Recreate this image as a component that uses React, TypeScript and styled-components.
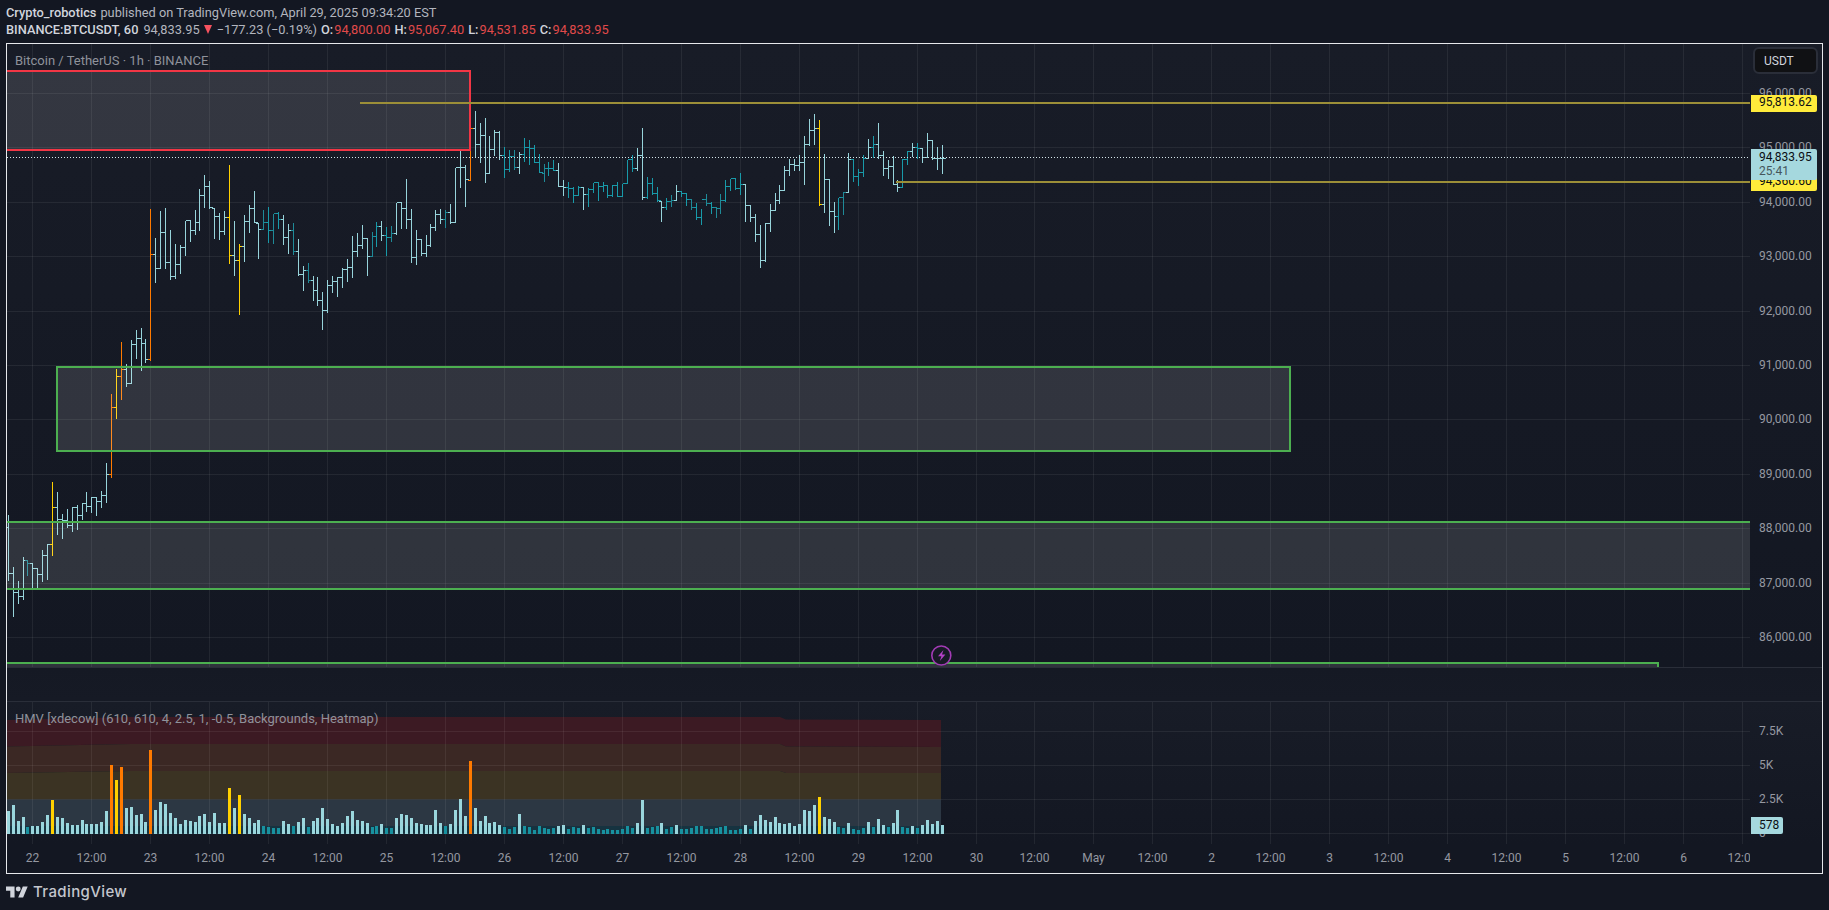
import React from "react";
import styled, { createGlobalStyle } from "styled-components";

const FONT = `Roboto, "Noto Sans", "Liberation Sans", sans-serif`;

const GlobalStyle = createGlobalStyle`
  html, body { margin: 0; padding: 0; background: #131722; }
  #root { width: 1829px; height: 910px; overflow: hidden; }
`;

const Page = styled.div`
  width: 1829px;
  height: 910px;
  display: flex;
  flex-direction: column;
  background: #131722;
  font-family: ${FONT};
  overflow: hidden;
`;

const Header = styled.header`
  height: 43px;
  box-sizing: border-box;
  padding: 4px 0 0 6px;
  display: flex;
  flex-direction: column;
  font-size: 12.8px;
  line-height: 17px;
  color: #b2b5be;
  white-space: nowrap;
`;

const MetaRow = styled.div`
  display: flex;
  align-items: center;
`;

const Strong = styled.span`
  color: #d1d4dc;
  font-weight: 500;
`;

const Quote = styled.span<{ $gap?: number }>`
  margin-left: ${(p) => p.$gap ?? 0}px;
  color: #b2b5be;
`;

const DownArrow = styled.span`
  width: 0;
  height: 0;
  margin: 0 5px 0 4px;
  border-left: 4.5px solid transparent;
  border-right: 4.5px solid transparent;
  border-top: 9px solid #f7525f;
`;

const OhlcKey = styled.span`
  margin-left: 4px;
  color: #d1d4dc;
  font-weight: 500;
`;

const OhlcValue = styled.span`
  margin-left: 1px;
  color: #e04a4a;
`;

const Frame = styled.section`
  width: 1817px;
  height: 831px;
  margin-left: 6px;
  box-sizing: border-box;
  border: 1px solid #e6e8ec;
  display: flex;
  flex-direction: column;
  flex: none;
`;

const Pane = styled.div<{ $height: number; $from: string; $to: string }>`
  height: ${(p) => p.$height}px;
  flex: none;
  display: flex;
  position: relative;
  background: linear-gradient(${(p) => p.$from}, ${(p) => p.$to});
`;

const Separator = styled.div`
  height: 1px;
  flex: none;
  background: #2a2e39;
`;

const Spacer = styled.div`
  height: 33px;
  flex: none;
  background: linear-gradient(#151924, #161a25);
`;

const Plot = styled.svg`
  width: 1743px;
  height: 100%;
  flex: none;
  display: block;
`;

const PriceAxis = styled.div`
  flex: 1;
  position: relative;
  color: #9598a1;
  font-size: 12px;
`;

const Legend = styled.div`
  position: absolute;
  left: 8px;
  font-size: 13px;
  line-height: 16px;
  color: #8f929b;
  white-space: nowrap;
`;

const AxisText = styled.span`
  position: absolute;
  left: 9px;
  transform: translateY(-50%);
  line-height: 14px;
  white-space: nowrap;
`;

const PriceTag = styled.div<{ $bg: string }>`
  position: absolute;
  left: 1px;
  width: 66px;
  box-sizing: border-box;
  padding-left: 8px;
  background: ${(p) => p.$bg};
  color: #0b0e14;
  line-height: 15px;
  border-radius: 0 2px 2px 0;
`;

const DualTag = styled(PriceTag)`
  padding-top: 1px;
  line-height: 14px;
`;

const Countdown = styled.div`
  color: #45565b;
`;

const VolumeTag = styled(PriceTag)`
  width: 32px;
  padding-top: 1px;
`;

const CurrencyButton = styled.div`
  position: absolute;
  top: 3px;
  left: 3px;
  width: 65px;
  height: 27px;
  box-sizing: border-box;
  padding-left: 9px;
  display: flex;
  align-items: center;
  background: #101114;
  border: 2px solid #2a2e39;
  border-radius: 6px;
  color: #d1d4dc;
  font-size: 12px;
`;

const TimeAxis = styled.div`
  height: 29px;
  flex: none;
  position: relative;
  background: #131722;
`;

const TimeTrack = styled.div`
  position: absolute;
  inset: 0 auto 0 0;
  width: 1743px;
  overflow: hidden;
`;

const TimeLabel = styled.span`
  position: absolute;
  top: 7px;
  transform: translateX(-50%);
  color: #9598a1;
  font-size: 12px;
  line-height: 15px;
  white-space: nowrap;
`;

const Footer = styled.footer`
  display: flex;
  align-items: center;
  gap: 5px;
  padding: 7px 0 0 6px;
`;

const LogoMark = styled.svg`
  width: 22px;
  height: 12px;
  display: block;
  fill: #d1d4dc;
`;

const LogoText = styled.span`
  font-family: Inter, "Noto Sans", sans-serif;
  font-size: 15px;
  font-weight: 500;
  line-height: 22px;
  color: #c4c6cd;
  letter-spacing: 0.38px;
`;

type Kind = "L" | "T" | "D" | "Y" | "O";
type Row = [Kind, number, number, number, number];

const BAR_COLOR: Record<Kind, string> = {
  L: "#97d4db",
  T: "#189aa9",
  D: "#1f8a98",
  Y: "#ffd000",
  O: "#ff7a00",
};

const A: Row[] = [
  ["L",620,582,780,760],["L",760,738,888,815],["L",815,780,849,827],["L",827,708,837,720],["D",720,717,765,730],
  ["L",730,726,807,745],["L",745,745,801,763],["L",763,687,783,706],["L",706,669,777,673],["Y",673,483,705,562],
  ["L",562,513,642,598],["L",598,579,654,601],["L",601,564,621,616],["L",616,558,633,562],["L",562,552,627,586],
  ["L",586,546,597,549],["L",549,513,573,558],["L",558,528,576,531],["L",531,528,585,544],["L",544,510,561,525],
  ["L",525,426,546,463],["O",463,219,471,262],["Y",262,144,294,169],["O",169,63,237,148],["L",148,129,198,190],
  ["L",190,57,189,72],["L",72,27,114,55],["L",55,21,150,70],["L",70,54,126,118],
];
const B: Row[] = [
  ["O",688,234,690,373],["L",373,321,456,415],["L",415,240,411,307],["L",307,231,414,397],["L",397,297,447,439],
  ["L",439,339,444,403],["L",403,342,429,352],["L",352,270,375,270],["L",270,270,333,301],["L",301,237,312,277],
  ["L",277,174,300,196],["L",196,132,231,169],["L",169,150,233,232],["L",235,231,324,259],["L",259,246,327,304],
  ["L",304,240,312,262],["Y",262,102,399,376],["L",376,270,435,391],["Y",391,339,552,349],["L",349,252,393,274],
  ["L",274,222,306,235],["L",235,180,277,277],["L",280,280,384,298],["D",298,237,298,277],["T",277,228,336,301],
  ["D",301,250,339,250],["T",250,243,294,268],["L",268,252,342,322],["L",322,279,369,301],["D",301,276,372,364],
  ["L",364,324,434,433],["L",433,405,480,421],["D",421,396,456,450],["L",450,435,510,481],["L",481,438,525,511],
  ["L",511,483,597,541],["L",541,447,545,466],["L",466,435,486,454],["L",454,438,498,441],["L",441,411,471,418],
  ["L",418,384,453,411],["L",411,315,441,364],["L",364,306,378,346],["L",346,282,354,325],["L",325,325,435,379],
  ["D",379,303,375,319],["T",319,273,348,289],["L",289,270,330,316],["T",316,288,375,322],["D",322,285,333,310],
  ["L",310,217,312,217],["L",217,217,294,235],["L",235,144,294,268],["L",268,235,396,381],["L",381,297,402,328],
  ["L",328,328,376,370],["L",370,312,378,346],["L",346,280,348,292],["L",292,238,300,253],["L",253,235,280,268],
  ["D",268,238,291,247],["L",247,220,280,277],["L",275,110,275,112],["L",112,55,170,112],["L",112,102,228,148],
];
const C: Row[] = [
  ["O",271,40,271,115],["L",115,60,202,163],["L",163,96,216,136],["L",136,82,276,250],["L",250,135,246,178],
  ["L",178,118,196,127],["L",127,120,208,196],["T",196,169,262,238],["T",238,177,244,199],["D",199,177,238,232],
  ["L",232,184,248,193],["T",193,142,213,172],["T",172,148,222,175],["T",175,162,217,217],["T",217,190,247,247],
  ["D",250,218,272,235],["T",235,212,256,235],["T",235,207,241,241],["L",241,217,289,287],["L",287,267,314,292],
  ["T",292,274,321,295],["T",295,289,335,314],["T",314,286,316,292],["L",292,291,356,313],["T",313,290,347,296],
  ["T",296,275,305,275],["T",275,275,330,289],["T",289,274,302,284],["T",284,283,320,314],["T",314,283,319,284],
  ["T",284,274,319,319],["T",319,280,319,280],["T",280,208,277,208],["T",208,192,244,235],["L",235,172,241,196],
  ["L",196,112,328,320],["T",320,259,323,280],["T",280,262,313,310],["T",310,289,332,331],["L",334,334,392,350],
  ["T",350,322,356,334],["D",334,313,347,331],["L",331,282,331,304],["T",304,304,319,310],["T",310,307,344,328],
  ["D",328,325,358,350],["T",350,337,386,380],["T",380,353,401,326],["D",326,310,346,338],["T",338,334,370,352],
  ["D",352,349,380,355],["D",355,310,368,331],["T",331,268,334,289],["T",289,265,301,265],["T",265,265,298,293],
  ["T",293,247,311,283],["L",283,283,392,346],["L",346,346,392,380],["L",380,370,452,433],["L",433,403,530,510],
  ["L",510,397,514,399],["L",399,340,422,361],["L",361,307,358,331],["L",331,283,340,301],["L",301,226,299,241],
  ["L",241,204,254,223],["L",223,205,240,224],["L",224,193,241,217],["L",217,136,282,163],["L",163,85,166,121],
  ["L",121,70,163,115],["Y",115,88,346,343],["L",343,190,367,268],["L",268,268,404,364],["L",364,332,425,379],
  ["T",379,320,418,322],["D",322,304,372,307],["L",307,186,306,208],["T",208,208,274,259],["T",259,234,285,247],
  ["T",247,193,257,205],["L",205,145,205,172],["T",172,136,201,163],["L",163,97,205,196],["L",196,181,255,235],
  ["L",235,207,263,229],["L",229,196,282,281],["L",281,268,302,292],["T",292,205,292,208],["T",208,181,221,184],
  ["L",184,157,199,172],["T",172,157,205,175],["L",175,172,217,202],["L",202,127,202,150],["L",150,148,208,205],
  ["L",205,169,238,205],["L",205,163,248,203],
];

type Bar = { kind: Kind; o: number; h: number; l: number; c: number };
const toBars = (rows: Row[], origin: number): Bar[] =>
  rows.map(([kind, o, h, l, c]) => ({
    kind,
    o: origin + o / 3,
    h: origin + h / 3,
    l: origin + l / 3,
    c: origin + c / 3,
  }));
const BARS: Bar[] = [...toBars(A, 320), ...toBars(B, 130), ...toBars(C, 90)];

const VOLUME = [
  363,345,393,381,-411,408,408,396,375,330,381,384,399,405,405,390,402,402,402,396,
  363,225,270,231,354,351,375,372,396,180,360,336,342,369,384,402,390,393,396,378,
  372,396,369,399,399,294,354,315,372,384,399,390,-408,-411,-414,-414,393,402,-408,396,
  384,-411,393,384,354,387,402,408,399,378,363,390,393,399,-411,-408,402,-414,-414,384,
  372,375,384,399,402,405,405,360,399,-408,402,360,327,378,213,354,393,378,399,396,405,
  -411,-417,-411,372,-408,-411,-420,-408,-414,-417,-414,408,405,-417,-411,-414,405,-414,-411,-417,
  -420,-417,-420,-420,-417,-408,-414,399,330,-414,-411,-408,399,-417,-411,405,-417,-417,-414,-408,
  -408,-417,-417,-414,-411,-408,-420,-420,-417,405,-417,393,375,390,396,381,399,402,399,408,
  402,360,363,345,321,381,387,396,-411,-414,399,-417,-420,-414,396,-411,387,405,-411,399,
  360,-411,-414,408,-414,405,390,402,393,405,
];

const barX = (i: number) => Math.floor(8.3 + 4.915 * i);
const snap = (v: number) => Math.round(v) + 0.5;

const GRID_X = Array.from({ length: 30 }, (_, k) => Math.round(32 + 58.97 * k) + 0.5);
const TIME_LABELS = [
  "22","12:00","23","12:00","24","12:00","25","12:00","26","12:00","27","12:00","28","12:00","29","12:00",
  "30","12:00","May","12:00","2","12:00","3","12:00","4","12:00","5","12:00","6","12:00",
];
const PRICE_TICKS = [96, 95, 94, 93, 92, 91, 90, 89, 88, 87, 86].map((v, k) => ({
  label: `${v},000.00`,
  y: 93 + k * 54.4,
}));
const VOLUME_TICKS = [
  { label: "7.5K", y: 731 },
  { label: "5K", y: 765 },
  { label: "2.5K", y: 799 },
  { label: "0", y: 833 },
];

const MAIN_TOP = 44;
const IND_TOP = 702;
const GRID = "rgba(255,255,255,0.065)";

const PriceBars = () => (
  <g shapeRendering="crispEdges" fill="none" strokeWidth={1}>
    {BARS.map((b, i) => {
      const x = barX(i) + 0.5;
      const d = `M${x} ${snap(b.h)}V${snap(b.l)}M${x - 3} ${snap(b.o)}H${x}M${x} ${snap(b.c)}H${x + 3}`;
      return <path key={i} d={d} stroke={BAR_COLOR[b.kind]} />;
    })}
  </g>
);

const BOX_FILL = "rgba(255,255,255,0.12)";

const MainChart = () => (
  <Plot viewBox={`7 ${MAIN_TOP} 1743 623`}>
    <g stroke={GRID} shapeRendering="crispEdges">
      {GRID_X.map((x) => <line key={x} x1={x} x2={x} y1={MAIN_TOP} y2={667} />)}
      {PRICE_TICKS.map((t) => <line key={t.label} x1={0} x2={1750} y1={snap(t.y)} y2={snap(t.y)} />)}
    </g>
    <PriceBars />
    <rect x={0} y={71} width={470} height={79} fill={BOX_FILL} stroke="#f23645" strokeWidth={2} />
    <rect x={57} y={367} width={1233} height={84} fill={BOX_FILL} stroke="#4caf50" strokeWidth={2} />
    <rect x={0} y={522} width={1760} height={67} fill={BOX_FILL} stroke="#4caf50" strokeWidth={2} />
    <rect x={0} y={663} width={1658} height={30} fill={BOX_FILL} stroke="#4caf50" strokeWidth={2} />
    <line x1={360} x2={1750} y1={103} y2={103} stroke="#9c8f38" strokeWidth={2} />
    <line x1={896} x2={1750} y1={182} y2={182} stroke="#9c8f38" strokeWidth={2} />
    <line x1={7} x2={1750} y1={157.5} y2={157.5} stroke="#d5e6ea" strokeWidth={1} strokeDasharray="1 2" />
    <circle cx={941.3} cy={655.5} r={9.5} fill="#171a25" stroke="#a23bb5" strokeWidth={1.6} />
    <path d="M943.5 650l-5.5 6.3h3.4l-1.6 4.7 5.6-6.4h-3.4z" fill="#b341c6" />
  </Plot>
);

const INDICATOR_BANDS = [
  { fill: "#3c1a23", points: "7,720 130,717 780,717 786,719.5 941,720 941,747 786,746.5 780,744 130,744 7,746.5" },
  { fill: "#3b2824", points: "7,746.5 130,744 780,744 786,746.5 941,747 941,773 786,773 780,771 130,771 7,773" },
  { fill: "#3b3323", points: "7,773 130,771 780,771 786,773 941,773 941,799.5 7,799.5" },
  { fill: "#2c3743", points: "7,799.5 941,799.5 941,826 7,826" },
  { fill: "#163340", points: "7,826 941,826 941,834 7,834" },
];

const IndicatorChart = () => (
  <Plot viewBox={`7 ${IND_TOP} 1743 142`}>
    {INDICATOR_BANDS.map((b) => <polygon key={b.fill} points={b.points} fill={b.fill} />)}
    <g stroke={GRID} shapeRendering="crispEdges">
      {GRID_X.map((x) => <line key={x} x1={x} x2={x} y1={IND_TOP} y2={845} />)}
      {VOLUME_TICKS.map((t) => <line key={t.label} x1={0} x2={1750} y1={t.y + 0.5} y2={t.y + 0.5} />)}
    </g>
    <g shapeRendering="crispEdges">
      {VOLUME.map((v, i) => {
        const top = 690 + Math.abs(v) / 3;
        const kind = BARS[i]?.kind;
        const fill =
          kind === "Y" || kind === "O" ? BAR_COLOR[kind] : v < 0 ? "#18919f" : "#9ad6dd";
        return <rect key={i} x={barX(i) - 1} y={top} width={3} height={834 - top} fill={fill} />;
      })}
    </g>
  </Plot>
);

export default function App() {
  return (
    <Page>
      <GlobalStyle />
      <Header>
        <MetaRow>
          <Strong>Crypto_robotics</Strong>
          <Quote $gap={4}>published on TradingView.com, April 29, 2025 09:34:20 EST</Quote>
        </MetaRow>
        <MetaRow>
          <Strong>BINANCE:BTCUSDT, 60</Strong>
          <Quote $gap={5}>94,833.95</Quote>
          <DownArrow />
          <Quote>−177.23 (−0.19%)</Quote>
          <OhlcKey>O:</OhlcKey><OhlcValue>94,800.00</OhlcValue>
          <OhlcKey>H:</OhlcKey><OhlcValue>95,067.40</OhlcValue>
          <OhlcKey>L:</OhlcKey><OhlcValue>94,531.85</OhlcValue>
          <OhlcKey>C:</OhlcKey><OhlcValue>94,833.95</OhlcValue>
        </MetaRow>
      </Header>

      <Frame>
        <Pane $height={623} $from="#181c27" $to="#131722">
          <Legend style={{ top: 9 }}>Bitcoin / TetherUS · 1h · BINANCE</Legend>
          <MainChart />
          <PriceAxis>
            {PRICE_TICKS.map((t) => (
              <AxisText key={t.label} style={{ top: t.y - MAIN_TOP }}>{t.label}</AxisText>
            ))}
            <CurrencyButton>USDT</CurrencyButton>
            <PriceTag $bg="#ffeb3b" style={{ top: 51, height: 17 }}>95,813.62</PriceTag>
            <PriceTag $bg="#ffeb3b" style={{ top: 130, height: 17 }}>94,360.60</PriceTag>
            <DualTag $bg="#a5d8de" style={{ top: 105, height: 31 }}>
              94,833.95
              <Countdown>25:41</Countdown>
            </DualTag>
          </PriceAxis>
        </Pane>
        <Separator />
        <Spacer />
        <Separator />
        <Pane $height={142} $from="#181c27" $to="#131722">
          <Legend style={{ top: 9 }}>HMV [xdecow] (610, 610, 4, 2.5, 1, -0.5, Backgrounds, Heatmap)</Legend>
          <IndicatorChart />
          <PriceAxis>
            {VOLUME_TICKS.map((t) => (
              <AxisText key={t.label} style={{ top: t.y - IND_TOP }}>{t.label}</AxisText>
            ))}
            <VolumeTag $bg="#a5d8de" style={{ top: 115, height: 17 }}>578</VolumeTag>
          </PriceAxis>
        </Pane>
        <TimeAxis>
          <TimeTrack>
            {TIME_LABELS.map((label, k) => (
              <TimeLabel key={k} style={{ left: GRID_X[k] - 7 }}>{label}</TimeLabel>
            ))}
          </TimeTrack>
        </TimeAxis>
      </Frame>

      <Footer>
        <LogoMark viewBox="0 4 36 18">
          <path d="M14 22H7V11H0V4h14v18zM28 22h-8l7.5-18h8L28 22z" />
          <circle cx="20" cy="8" r="4" />
        </LogoMark>
        <LogoText>TradingView</LogoText>
      </Footer>
    </Page>
  );
}
